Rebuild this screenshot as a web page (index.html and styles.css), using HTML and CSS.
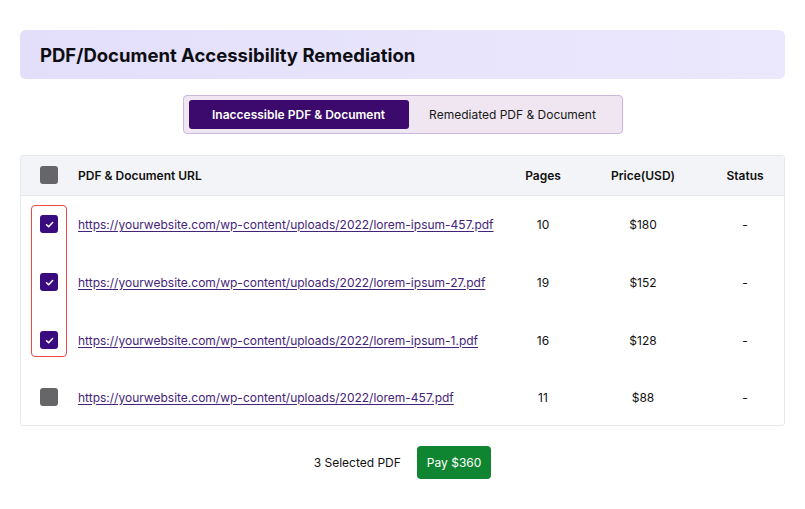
FILE: index.html
```html
<!DOCTYPE html>
<html lang="en">
<head>
  <meta charset="UTF-8" />
  <meta name="viewport" content="width=device-width, initial-scale=1.0"/>
  <title>PDF/Document Accessibility Remediation</title>
  <link rel="stylesheet" href="styles.css">
</head>
<body>
  <div class="page-head">
    <h1>PDF/Document Accessibility Remediation</h1>
  </div>

  <div class="tabs-wrap">
    <div class="tabs">
      <button class="tab active">Inaccessible PDF &amp; Document</button>
      <button class="tab">Remediated PDF &amp; Document</button>
    </div>
  </div>

  <div class="table-box">
    <div class="selected-outline"></div>
    <table>
      <colgroup>
        <col class="w-check">
        <col>
        <col class="w-pages">
        <col class="w-price">
        <col class="w-status">
      </colgroup>
      <thead>
        <tr>
          <th class="col-check"><span class="box"></span></th>
          <th class="col-url">PDF &amp; Document URL</th>
          <th class="col-num">Pages</th>
          <th class="col-num">Price(USD)</th>
          <th class="col-num">Status</th>
        </tr>
      </thead>
      <tbody>
        <tr>
          <td class="col-check"><span class="box checked"><svg viewBox="0 0 10 10"><path d="M2.3 5.2 L4.2 7 L7.8 3.2"/></svg></span></td>
          <td class="col-url"><a href="#">https://yourwebsite.com/wp-content/uploads/2022/lorem-ipsum-457.pdf</a></td>
          <td class="col-num">10</td>
          <td class="col-num">$180</td>
          <td class="col-num">-</td>
        </tr>
        <tr>
          <td class="col-check"><span class="box checked"><svg viewBox="0 0 10 10"><path d="M2.3 5.2 L4.2 7 L7.8 3.2"/></svg></span></td>
          <td class="col-url"><a href="#">https://yourwebsite.com/wp-content/uploads/2022/lorem-ipsum-27.pdf</a></td>
          <td class="col-num">19</td>
          <td class="col-num">$152</td>
          <td class="col-num">-</td>
        </tr>
        <tr>
          <td class="col-check"><span class="box checked"><svg viewBox="0 0 10 10"><path d="M2.3 5.2 L4.2 7 L7.8 3.2"/></svg></span></td>
          <td class="col-url"><a href="#">https://yourwebsite.com/wp-content/uploads/2022/lorem-ipsum-1.pdf</a></td>
          <td class="col-num">16</td>
          <td class="col-num">$128</td>
          <td class="col-num">-</td>
        </tr>
        <tr>
          <td class="col-check"><span class="box"></span></td>
          <td class="col-url"><a href="#">https://yourwebsite.com/wp-content/uploads/2022/lorem-457.pdf</a></td>
          <td class="col-num">11</td>
          <td class="col-num">$88</td>
          <td class="col-num">-</td>
        </tr>
      </tbody>
    </table>
  </div>

  <div class="pay-row">
    <span class="selected-count">3 Selected PDF</span>
    <button class="pay-btn">Pay $360</button>
  </div>
</body>
</html>
```

FILE: styles.css
```css
body {
  margin: 0;
  padding: 30px 20px;
  font-family: 'Inter', 'Noto Sans', sans-serif;
  color: #111;
  background: #fff;
}

.page-head {
  height: 49px;
  display: flex;
  align-items: center;
  padding: 0 20px;
  border-radius: 6px;
  background: linear-gradient(90deg, #e3dffb 0%, #ebe8fd 100%);
}

.page-head h1 {
  margin: 0;
  font-size: 18.5px;
  font-weight: 700;
  color: #0d0d12;
  padding-top: 1px;
}

.tabs-wrap {
  display: flex;
  justify-content: center;
  margin-top: 16px;
}

.tabs {
  display: flex;
  padding: 4px 5px;
  background: #efe6f1;
  border: 1px solid #c9b9dc;
  border-radius: 4px;
}

.tab {
  height: 29px;
  padding: 0 12px;
  border: none;
  border-radius: 3px;
  background: transparent;
  font-family: inherit;
  font-size: 12px;
  color: #1a1a1a;
  cursor: pointer;
}

.tab:first-child {
  width: 220px;
}

.tab:last-child {
  width: 208px;
}

.tab.active {
  background: #3b0a6c;
  color: #fff;
  font-weight: 600;
}

.table-box {
  position: relative;
  margin-top: 21px;
  border: 1px solid #e6e8ec;
  border-radius: 3px;
}

table {
  width: 100%;
  table-layout: fixed;
  border-collapse: collapse;
  font-size: 12px;
}

.w-check { width: 57px; }
.w-pages { width: 74px; }
.w-price { width: 126px; }
.w-status { width: 78px; }

thead tr {
  height: 39px;
  background: #f3f4f7;
  border-bottom: 1px solid #e6e8ec;
}

th {
  font-weight: 600;
  color: #111;
}

tbody tr {
  height: 58px;
}

tbody tr:last-child {
  height: 56px;
}

.col-check {
  padding: 0 0 0 19px;
  text-align: left;
}

.col-url {
  text-align: left;
  padding: 0;
  white-space: nowrap;
}

.col-num {
  padding: 0;
  text-align: center;
}

.col-url a {
  color: #45237a;
  text-decoration: underline;
  text-underline-offset: 2px;
}

.box {
  display: flex;
  align-items: center;
  justify-content: center;
  width: 18px;
  height: 18px;
  border-radius: 3px;
  background: #666668;
}

.box.checked {
  background: #3a0b7e;
}

.box svg {
  width: 11px;
  height: 11px;
}

.box svg path {
  fill: none;
  stroke: #fff;
  stroke-width: 1.4;
  stroke-linecap: round;
  stroke-linejoin: round;
}

.selected-outline {
  position: absolute;
  left: 10px;
  top: 49px;
  width: 34px;
  height: 150px;
  border: 1.5px solid #f04747;
  border-radius: 4px;
  pointer-events: none;
}

.pay-row {
  display: flex;
  justify-content: center;
  align-items: center;
  gap: 16px;
  margin-top: 20px;
}

.selected-count {
  font-size: 12px;
  color: #111;
}

.pay-btn {
  height: 33px;
  padding: 0 10px;
  border: none;
  border-radius: 4px;
  background: #0f8532;
  color: #fff;
  font-family: inherit;
  font-size: 12px;
  cursor: pointer;
}
```
